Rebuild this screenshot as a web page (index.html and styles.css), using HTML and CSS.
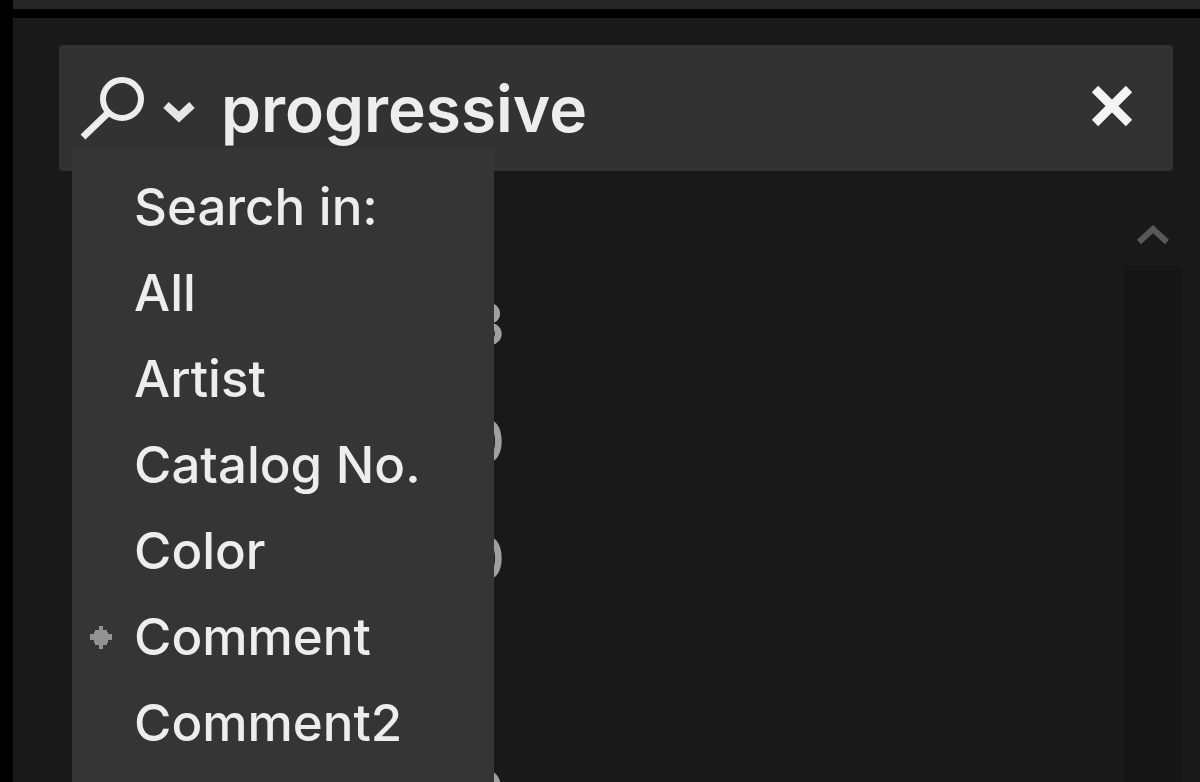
FILE: index.html
```
<!DOCTYPE html>
<html lang="en">
<head>
    <meta charset="UTF-8">
    <meta name="viewport" content="width=device-width, initial-scale=1.0">
    <title>Search</title>
    <link rel="stylesheet" href="styles.css">
</head>
<body>
    <div class="topbar"></div>
    <main class="panel">
        <form class="search" role="search">
            <button class="searchMode" type="button" aria-label="Search in" aria-expanded="true">
                <svg width="66" height="66" viewBox="0 0 66 66" fill="none" stroke="#ededed">
                    <circle cx="43" cy="24" r="19" stroke-width="6"/>
                    <path d="M29 38L4 62" stroke-width="7"/>
                </svg>
                <svg width="32" height="32" viewBox="0 0 32 32" fill="none" stroke="#e6e6e6" stroke-width="8">
                    <path d="M3 13L16 25L29 13"/>
                </svg>
            </button>
            <input class="searchText" type="text" value="progressive" aria-label="Search text">
            <button class="clear" type="button" aria-label="Clear search">
                <svg width="42" height="46" viewBox="0 0 42 46" stroke="#f4f4f4" stroke-width="9">
                    <path d="M4 4L38 38M38 4L4 38"/>
                </svg>
            </button>
            <div class="menu" role="menu">
                <div class="menuTitle">Search in:</div>
                <button type="button" role="menuitemradio" aria-checked="false">All</button>
                <button type="button" role="menuitemradio" aria-checked="false">Artist</button>
                <button type="button" role="menuitemradio" aria-checked="false">Catalog No.</button>
                <button type="button" role="menuitemradio" aria-checked="false">Color</button>
                <button class="selected" type="button" role="menuitemradio" aria-checked="true">
                    <svg width="24" height="24" viewBox="0 0 24 24" fill="#929292">
                        <path d="M10 0h4v4h4v4h5v6h-5v5h-4v4h-4v-4H6v-5H1V8h5V4h4z"/>
                        <path d="M5 6h14v11H5z"/>
                    </svg>Comment</button>
                <button type="button" role="menuitemradio" aria-checked="false">Comment2</button>
            </div>
        </form>
        <div class="results">
            <ul class="counts">
                <li>8</li>
                <li>0</li>
                <li>0</li>
                <li></li>
                <li>0</li>
            </ul>
            <div class="scrollbar">
                <button class="scrollUp" type="button" aria-label="Scroll up">
                    <svg width="32" height="20" viewBox="0 0 32 20" fill="none" stroke="#595959" stroke-width="6">
                        <path d="M2 17L16 4L30 17"/>
                    </svg>
                </button>
                <div class="track"></div>
            </div>
        </div>
    </main>
</body>
</html>
```
FILE: styles.css
```
*{
    box-sizing: border-box;
}
body{
    margin: 0;
    height: 100vh;
    display: flex;
    flex-direction: column;
    overflow: hidden;
    background-color: #000;
    color: #ededed;
    font-family: Inter, "Liberation Sans", sans-serif;
    font-weight: 500;
}
button, input{
    margin: 0;
    padding: 0;
    border: 0;
    outline: 0;
    background: none;
    color: inherit;
    font: inherit;
}
svg{
    display: block;
}
.topbar{
    height: 9px;
    flex: none;
    margin: 0 0 9px 13px;
    background-color: #262626;
}
.panel{
    flex: 1;
    min-height: 0;
    display: flex;
    flex-direction: column;
    margin-left: 13px;
    padding: 27px 19px 0 46px;
    background-color: #191919;
}
.search{
    position: relative;
    flex: none;
    display: flex;
    align-items: center;
    height: 126px;
    margin-right: 8px;
    padding: 0 40px 0 20px;
    border-radius: 4px;
    background-color: #323232;
}
.searchMode{
    display: flex;
    align-items: center;
    gap: 18px;
}
.searchText{
    flex: 1;
    min-width: 0;
    height: 80px;
    margin-left: 26px;
    font-size: 64px;
    font-weight: 600;
}
.menu{
    position: absolute;
    top: 103px;
    left: 13px;
    z-index: 1;
    width: 422px;
    height: calc(100vh - 148px);
    padding-top: 16px;
    background-color: #353535;
    font-size: 51px;
}
.menu>button, .menuTitle{
    position: relative;
    display: block;
    width: 100%;
    height: 86px;
    padding-left: 62px;
    line-height: 86px;
    text-align: left;
}
.selected>svg{
    position: absolute;
    top: 32px;
    left: 17px;
}
.results{
    flex: 1;
    min-height: 0;
    display: flex;
    justify-content: space-between;
}
.counts{
    width: 446px;
    margin: 0;
    padding: 95px 0 0;
    overflow: hidden;
    list-style: none;
    color: #a0a0a0;
    font-size: 60px;
    line-height: 117px;
    text-align: right;
}
.counts>li{
    height: 117px;
}
.scrollbar{
    width: 57px;
    display: flex;
    flex-direction: column;
}
.scrollUp{
    height: 95px;
    padding: 32px 0 0;
}
.scrollUp>svg{
    margin: 0 auto;
}
.track{
    flex: 1;
    background-color: #151515;
}
```
